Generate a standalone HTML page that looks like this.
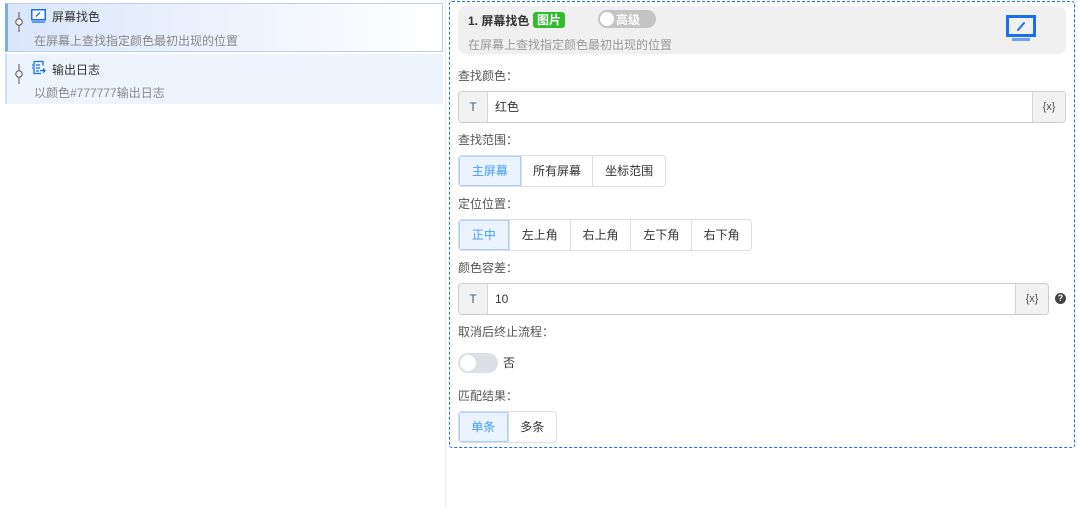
<!DOCTYPE html>
<html><head><meta charset="utf-8"><style>
*{box-sizing:border-box;margin:0;padding:0}
body{width:1078px;height:507px;background:#fff;font-family:"Liberation Sans","Noto Sans CJK SC",sans-serif;font-size:12px;color:#333;position:relative;overflow:hidden}
.a{position:absolute}
.divider{left:445px;top:0;width:1px;height:507px;background:#ececec}
.item1{left:5px;top:3px;width:438px;height:49px;background:linear-gradient(90deg,#dbe6fb,#ffffff);border:1px solid #b8cff3;border-left:3px solid #7badea}
.item2{left:5px;top:54px;width:438px;height:50px;background:#eef4fd;border-left:2px solid #cfe0f7}
.t{font-size:12px;color:#333;white-space:nowrap}
.d{font-size:12px;color:#888;white-space:nowrap}
.panel{left:449px;top:1px;width:626px;height:447px;border:1px dashed #1a6ef0;border-radius:3px}
.head{left:458px;top:6px;width:608px;height:48px;background:#f0f0f0;border-radius:8px}
.badge{left:533px;top:12px;width:32px;height:16px;background:#2fbd2f;color:#fff;border-radius:3px;font-size:12px;font-weight:bold;text-align:center;line-height:16px}
.tog{left:598px;top:10px;width:58px;height:18px;background:#c4c4c4;border-radius:9px}
.lbl{font-size:12px;color:#555}
.inp{height:32px;border:1px solid #cdcdcd;border-radius:4px;background:#fff;overflow:hidden}
.inp .p{position:absolute;top:0;height:30px;background:#f2f2f2;line-height:30px;text-align:center;color:#555}
.inp .v{position:absolute;left:36px;top:0;line-height:30px;color:#333}
.bg{height:32px;display:flex;border:1px solid #dcdfe6;border-radius:4px;overflow:hidden}
.bg div{line-height:30px;text-align:center;color:#333;border-left:1px solid #dcdfe6}
.bg div:first-child{border-left:none;background:#ebf3ff;color:#409eff;box-shadow:inset 0 0 0 1px #a8d0ff}
</style></head><body>
<div class="a divider"></div>
<div class="a item1"></div>
<div class="a item2"></div>
<svg class="a" style="left:14px;top:12px" width="10" height="20"><line x1="5" y1="0" x2="5" y2="20" stroke="#555"/><circle cx="5" cy="10" r="3.2" fill="#fff" stroke="#555"/></svg>
<svg class="a" style="left:14px;top:64px" width="10" height="20"><line x1="5" y1="0" x2="5" y2="20" stroke="#555"/><circle cx="5" cy="10" r="3.2" fill="#fff" stroke="#555"/></svg>
<svg class="a" style="left:31px;top:9px" width="15" height="14"><rect x="0.75" y="0.75" width="13.5" height="10" fill="#fff" stroke="#1a6ef0" stroke-width="1.5"/><line x1="5" y1="7.5" x2="9" y2="3.5" stroke="#1a6ef0" stroke-width="1.3"/><rect x="1" y="12" width="13" height="2" fill="#5b9bf5"/></svg>
<svg class="a" style="left:31px;top:60px" width="15" height="16" fill="none" stroke="#1a6ef0" stroke-width="1.3"><path d="M3 1.5h9v4M3 1.5v12h7M5 5h4M1 5h1M5 8h4M1 8h1M5 11h3M9 10.5h5.5M12 8.5l2 2-2 2"/></svg>
<div class="a t" style="left:52px;top:8px">屏幕找色</div>
<div class="a d" style="left:34px;top:32px">在屏幕上查找指定颜色最初出现的位置</div>
<div class="a t" style="left:52px;top:61px">输出日志</div>
<div class="a d" style="left:34px;top:84px">以颜色#777777输出日志</div>

<div class="a panel"></div>
<div class="a head"></div>
<div class="a t" style="left:468px;top:12px;font-weight:bold">1. 屏幕找色</div>
<div class="a badge">图片</div>
<div class="a tog"></div>
<div class="a" style="left:600px;top:12px;width:14px;height:14px;background:#fff;border-radius:50%"></div>
<div class="a" style="left:616px;top:11px;color:#fff;font-weight:bold;font-size:12px">高级</div>
<div class="a d" style="left:468px;top:36px;color:#999">在屏幕上查找指定颜色最初出现的位置</div>
<svg class="a" style="left:1006px;top:15px" width="30" height="28"><rect x="0" y="0" width="30" height="22" fill="#1a6ef0"/><rect x="3" y="3" width="24" height="16" fill="#f0f0f0"/><line x1="12" y1="15" x2="18" y2="8" stroke="#1a6ef0" stroke-width="2" stroke-linecap="round"/><rect x="6" y="23" width="18" height="3" fill="#6aa3f5"/></svg>

<div class="a lbl" style="left:458px;top:67px">查找颜色：</div>
<div class="a inp" style="left:458px;top:91px;width:608px"><div class="p" style="left:0;width:29px;border-right:1px solid #d5d5d5;color:#3d5f7e">T</div><div class="v">红色</div><div class="p" style="right:0;width:33px;border-left:1px solid #d5d5d5;font-size:11px">{x}</div></div>

<div class="a lbl" style="left:458px;top:131px">查找范围：</div>
<div class="a bg" style="left:458px;top:155px;width:208px"><div style="width:62px">主屏幕</div><div style="width:72px">所有屏幕</div><div style="width:73px">坐标范围</div></div>

<div class="a lbl" style="left:458px;top:195px">定位位置：</div>
<div class="a bg" style="left:458px;top:219px;width:294px"><div style="width:50px">正中</div><div style="width:61px">左上角</div><div style="width:61px">右上角</div><div style="width:61px">左下角</div><div style="width:60px">右下角</div></div>

<div class="a lbl" style="left:458px;top:259px">颜色容差：</div>
<div class="a inp" style="left:458px;top:283px;width:591px"><div class="p" style="left:0;width:29px;border-right:1px solid #d5d5d5;color:#3d5f7e">T</div><div class="v">10</div><div class="p" style="right:0;width:33px;border-left:1px solid #d5d5d5;font-size:11px">{x}</div></div>
<div class="a" style="left:1055px;top:293px;width:11px;height:11px;border-radius:50%;background:#444;color:#fff;font-size:9px;font-weight:bold;text-align:center;line-height:11px">?</div>

<div class="a lbl" style="left:458px;top:323px">取消后终止流程：</div>
<div class="a" style="left:458px;top:353px;width:40px;height:20px;border-radius:10px;background:#dcdfe6"></div>
<div class="a" style="left:460px;top:355px;width:16px;height:16px;border-radius:50%;background:#fff"></div>
<div class="a t" style="left:503px;top:354px">否</div>

<div class="a lbl" style="left:458px;top:387px">匹配结果：</div>
<div class="a bg" style="left:458px;top:411px;width:99px"><div style="width:49px">单条</div><div style="width:49px">多条</div></div>
</body></html>
